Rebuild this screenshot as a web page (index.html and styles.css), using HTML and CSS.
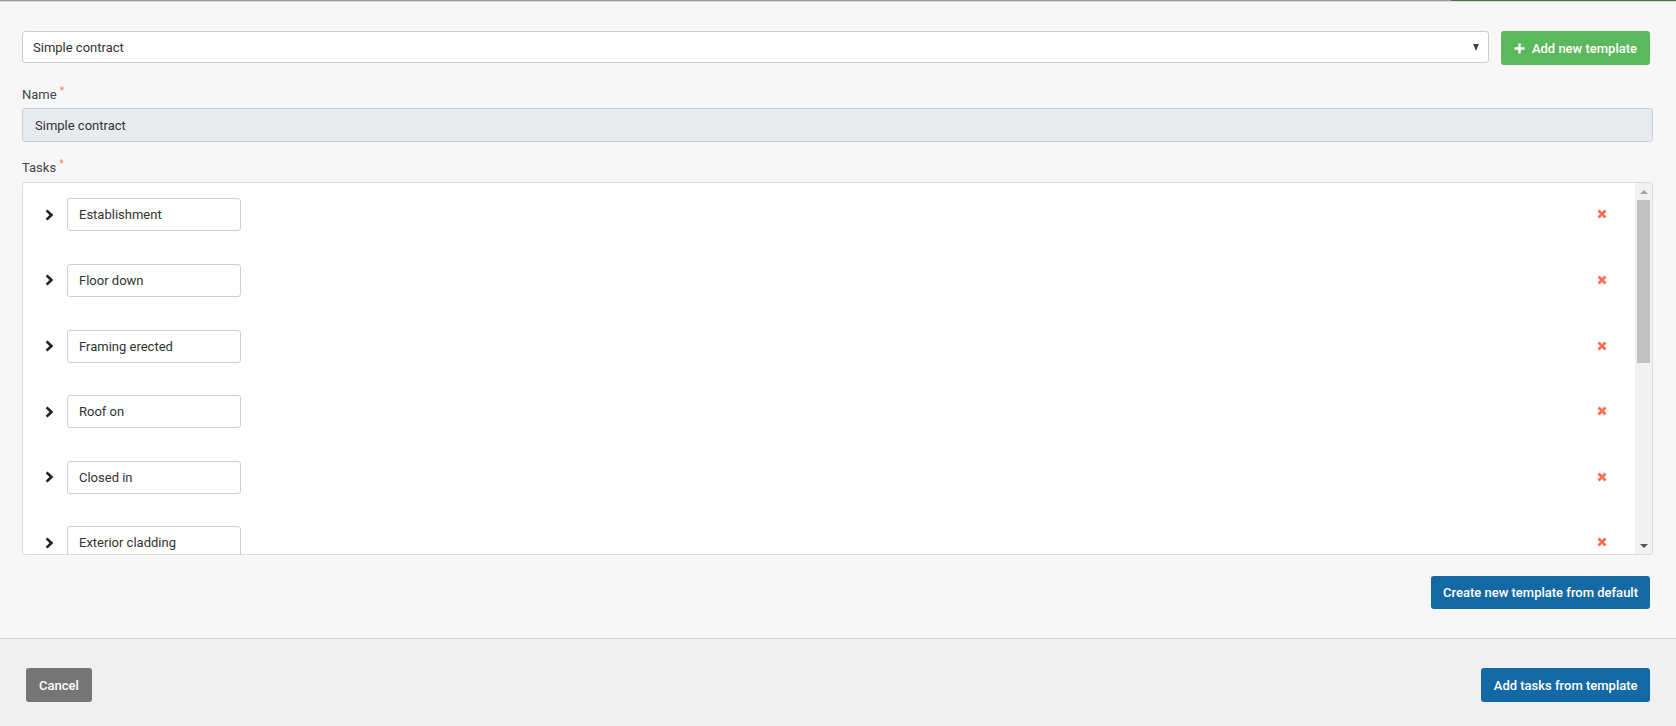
FILE: index.html
```html
<!DOCTYPE html>
<html lang="en">
<head>
	<meta charset="UTF-8">
	<title>Task templates</title>
	<link rel="stylesheet" href="styles.css">
</head>
<body>
<div class="topline"><div class="topline-left"></div><div class="topline-right"></div></div>

<div class="page">
	<div class="template-row">
		<div class="select"><span>Simple contract</span><span class="caret"></span></div>
		<button class="btn btn-green">
			<svg class="plus" width="11" height="11" viewBox="0 0 11 11"><path d="M5.5 0.5V10.5M0.5 5.5H10.5"/></svg>
			Add new template
		</button>
	</div>

	<div class="field field-name">
		<label>Name<span class="req">*</span></label>
		<input class="input input-locked" type="text" value="Simple contract" readonly>
	</div>

	<div class="field field-tasks">
		<label>Tasks<span class="req">*</span></label>
		<div class="task-list">
			<div class="task-rows">
				<div class="task">
					<svg class="chevron" width="9" height="12" viewBox="0 0 9 12"><path d="M1.6 1.4L6.4 6L1.6 10.6"/></svg>
					<input class="input task-input" type="text" value="Establishment">
					<svg class="remove" width="10" height="10" viewBox="0 0 10 10"><path d="M1.5 1.5L8.5 8.5M8.5 1.5L1.5 8.5"/></svg>
				</div>
				<div class="task">
					<svg class="chevron" width="9" height="12" viewBox="0 0 9 12"><path d="M1.6 1.4L6.4 6L1.6 10.6"/></svg>
					<input class="input task-input" type="text" value="Floor down">
					<svg class="remove" width="10" height="10" viewBox="0 0 10 10"><path d="M1.5 1.5L8.5 8.5M8.5 1.5L1.5 8.5"/></svg>
				</div>
				<div class="task">
					<svg class="chevron" width="9" height="12" viewBox="0 0 9 12"><path d="M1.6 1.4L6.4 6L1.6 10.6"/></svg>
					<input class="input task-input" type="text" value="Framing erected">
					<svg class="remove" width="10" height="10" viewBox="0 0 10 10"><path d="M1.5 1.5L8.5 8.5M8.5 1.5L1.5 8.5"/></svg>
				</div>
				<div class="task">
					<svg class="chevron" width="9" height="12" viewBox="0 0 9 12"><path d="M1.6 1.4L6.4 6L1.6 10.6"/></svg>
					<input class="input task-input" type="text" value="Roof on">
					<svg class="remove" width="10" height="10" viewBox="0 0 10 10"><path d="M1.5 1.5L8.5 8.5M8.5 1.5L1.5 8.5"/></svg>
				</div>
				<div class="task">
					<svg class="chevron" width="9" height="12" viewBox="0 0 9 12"><path d="M1.6 1.4L6.4 6L1.6 10.6"/></svg>
					<input class="input task-input" type="text" value="Closed in">
					<svg class="remove" width="10" height="10" viewBox="0 0 10 10"><path d="M1.5 1.5L8.5 8.5M8.5 1.5L1.5 8.5"/></svg>
				</div>
				<div class="task">
					<svg class="chevron" width="9" height="12" viewBox="0 0 9 12"><path d="M1.6 1.4L6.4 6L1.6 10.6"/></svg>
					<input class="input task-input" type="text" value="Exterior cladding">
					<svg class="remove" width="10" height="10" viewBox="0 0 10 10"><path d="M1.5 1.5L8.5 8.5M8.5 1.5L1.5 8.5"/></svg>
				</div>
				<div class="task">
					<svg class="chevron" width="9" height="12" viewBox="0 0 9 12"><path d="M1.6 1.4L6.4 6L1.6 10.6"/></svg>
					<input class="input task-input" type="text" value="Pre-line">
					<svg class="remove" width="10" height="10" viewBox="0 0 10 10"><path d="M1.5 1.5L8.5 8.5M8.5 1.5L1.5 8.5"/></svg>
				</div>
			</div>
			<div class="scrollbar">
				<div class="sb-button"><span class="sb-arrow-up"></span></div>
				<div class="sb-track"><div class="sb-thumb"></div></div>
				<div class="sb-button"><span class="sb-arrow-down"></span></div>
			</div>
		</div>
	</div>

	<div class="actions">
		<button class="btn btn-blue">Create new template from default</button>
	</div>
</div>

<div class="footer">
	<button class="btn btn-gray">Cancel</button>
	<button class="btn btn-blue btn-tall">Add tasks from template</button>
</div>
</body>
</html>
```

FILE: styles.css
```css
html{
	background-color: #f0f0f0;
}
body{
	margin: 0;
	font-size: 13px;
	font-family: Roboto, "Liberation Sans", sans-serif;
	color: #333;
}
.topline{
	display: flex;
	height: 1px;
	border-bottom: 1px solid #d9d9d9;
}
.topline-left{
	flex: 1;
	background-color: #9a9a9a;
}
.topline-right{
	width: 225px;
	background-color: #3f7a3c;
}

.page{
	background-color: #f7f7f7;
	padding: 29px 23px 29px 22px;
}
.template-row{
	display: flex;
	align-items: flex-start;
	gap: 12px;
	padding-right: 3px;
}
.select{
	flex: 1;
	height: 32px;
	box-sizing: border-box;
	display: flex;
	align-items: center;
	justify-content: space-between;
	padding: 0 9px 0 10px;
	background-color: #fff;
	border: 1px solid #ccc;
	border-radius: 3px;
	color: #333;
}
.caret{
	width: 0;
	height: 0;
	border-left: 3.5px solid transparent;
	border-right: 3.5px solid transparent;
	border-top: 7px solid #444;
}

.btn{
	font-family: inherit;
	font-size: 13px;
	font-weight: 500;
	color: #fff;
	border: none;
	border-radius: 3px;
	height: 33px;
	padding: 0 12px;
	outline: none;
	display: inline-flex;
	align-items: center;
	gap: 7px;
}
.btn-tall{
	height: 34px;
	padding: 0 12.5px;
}
.btn-green{
	background-color: #5cb85c;
	height: 34px;
	padding: 0 13px;
}
.btn-blue{
	background-color: #1469a4;
}
.btn-gray{
	background-color: #757575;
	height: 34px;
	padding: 0 13px;
}
.plus path{
	stroke: #fff;
	stroke-width: 2.4;
	fill: none;
}

.field label{
	display: block;
	line-height: 15px;
	color: #444;
	margin-bottom: 6px;
}
.field-name{
	margin-top: 22px;
}
.field-tasks{
	margin-top: 18px;
}
.field-tasks label{
	margin-bottom: 7px;
}
.req{
	color: #f47c67;
	font-size: 10px;
	line-height: 0;
	vertical-align: 5px;
	margin-left: 3px;
}

.input{
	font-family: inherit;
	font-size: 13px;
	color: #333;
	box-sizing: border-box;
	border: 1px solid #ccd0d5;
	border-radius: 3px;
	background-color: #fff;
	outline: none;
}
.input-locked{
	width: 100%;
	height: 34px;
	padding: 0 12px;
	background-color: #e8ebee;
}

.task-list{
	height: 373px;
	box-sizing: border-box;
	display: flex;
	overflow: hidden;
	background-color: #fff;
	border: 1px solid #dcdcdc;
	border-radius: 3px;
}
.task-rows{
	flex: 1;
	overflow: hidden;
}
.task{
	display: flex;
	align-items: flex-start;
	height: 65.6px;
	box-sizing: border-box;
	padding: 15.4px 28px 0 22px;
}
.chevron{
	flex: none;
	margin: 10.5px 13px 0 0;
}
.chevron path{
	stroke: #222;
	stroke-width: 2.7;
	fill: none;
}
.task-input{
	width: 174px;
	height: 33px;
	padding: 0 11px;
}
.remove{
	margin: 11px 0 0 auto;
}
.remove path{
	stroke: #fd6f52;
	stroke-width: 2.8;
	fill: none;
}

.scrollbar{
	width: 17px;
	display: flex;
	flex-direction: column;
	background-color: #f1f1f1;
}
.sb-button{
	height: 17px;
	display: flex;
	align-items: center;
	justify-content: center;
}
.sb-arrow-up{
	width: 0;
	height: 0;
	border-left: 4px solid transparent;
	border-right: 4px solid transparent;
	border-bottom: 4px solid #a3a3a3;
}
.sb-arrow-down{
	width: 0;
	height: 0;
	border-left: 4px solid transparent;
	border-right: 4px solid transparent;
	border-top: 4px solid #505050;
}
.sb-track{
	flex: 1;
	padding: 0 2px;
}
.sb-thumb{
	height: 163px;
	background-color: #c1c1c1;
}

.actions{
	display: flex;
	justify-content: flex-end;
	margin-top: 21px;
	padding-right: 3px;
}

.footer{
	display: flex;
	justify-content: space-between;
	align-items: center;
	border-top: 1px solid #d5d5d5;
	padding: 29px 26px 0 26px;
}
```
